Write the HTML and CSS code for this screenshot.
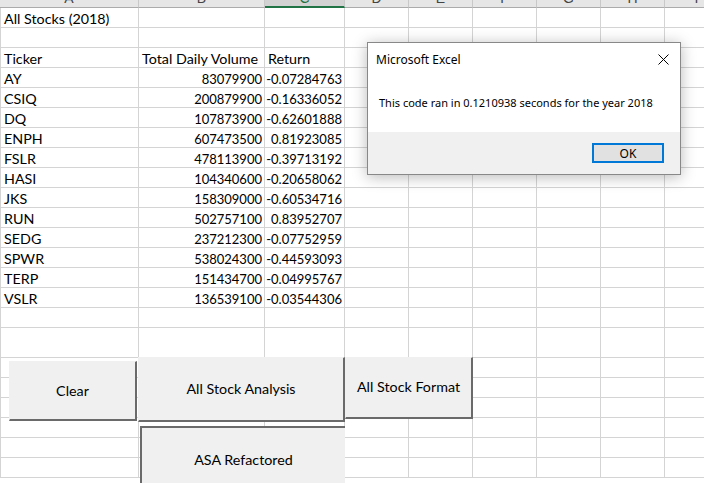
FILE: index.html
```html
<!DOCTYPE html>
<html>
<head>
<meta charset="utf-8">
<link rel="stylesheet" href="styles.css">
</head>
<body>
<div class="sheet">
  <div class="grid">
    <div class="hd"><span>A</span></div>
    <div class="hd"><span>B</span></div>
    <div class="hd hd-sel"><span>C</span></div>
    <div class="hd"><span>D</span></div>
    <div class="hd"><span>E</span></div>
    <div class="hd"><span>F</span></div>
    <div class="hd"><span>G</span></div>
    <div class="hd"><span>H</span></div>
    <div class="hd"><span>I</span></div>
  </div>
  <div class="grid body" id="body"></div>

  <button class="xbtn b-clear">Clear</button>
  <button class="xbtn b-asa">All Stock Analysis</button>
  <button class="xbtn b-fmt">All Stock Format</button>
  <button class="xbtn b-ref">ASA Refactored</button>

  <div class="dialog">
    <div class="dlg-title">
      <span>Microsoft Excel</span>
      <svg class="dlg-x" width="11" height="11" viewBox="0 0 11 11"><path d="M0.5 0.5 L10.5 10.5 M10.5 0.5 L0.5 10.5" stroke="#000" stroke-width="1" fill="none"/></svg>
    </div>
    <div class="dlg-msg">This code ran in 0.1210938 seconds for the year 2018</div>
    <div class="dlg-foot"><div class="ok">OK</div></div>
  </div>
</div>
<script src="script.js"></script>
</body>
</html>
```
FILE: script.js
```js
const rows = [
  ["All Stocks (2018)", "", ""],
  ["", "", ""],
  ["Ticker", "Total Daily Volume", "Return"],
  ["AY", "83079900", "-0.07284763"],
  ["CSIQ", "200879900", "-0.16336052"],
  ["DQ", "107873900", "-0.62601888"],
  ["ENPH", "607473500", "0.81923085"],
  ["FSLR", "478113900", "-0.39713192"],
  ["HASI", "104340600", "-0.20658062"],
  ["JKS", "158309000", "-0.60534716"],
  ["RUN", "502757100", "0.83952707"],
  ["SEDG", "237212300", "-0.07752959"],
  ["SPWR", "538024300", "-0.44593093"],
  ["TERP", "151434700", "-0.04995767"],
  ["VSLR", "136539100", "-0.03544306"],
  ["", "", ""],
  ["", "", "", "tall"],
  ["", "", ""], ["", "", ""], ["", "", ""], ["", "", ""], ["", "", ""], ["", "", ""]
];
const body = document.getElementById("body");
rows.forEach((r, i) => {
  for (let c = 0; c < 9; c++) {
    const d = document.createElement("div");
    d.className = "cell" + (r[3] === "tall" ? " tall" : "");
    const v = c < 3 ? r[c] : "";
    if (v) {
      d.textContent = v;
      if (i >= 3 && c > 0) d.classList.add("num");
    }
    body.appendChild(d);
  }
});
```
FILE: styles.css
```css
* { box-sizing: border-box; }
html, body { margin: 0; padding: 0; background: #fff; overflow: hidden; }
body { width: 704px; height: 483px; }
.sheet { position: relative; width: 704px; height: 483px; overflow: hidden; font-family: Lato, "Liberation Sans", sans-serif; font-size: 14.3px; color: #000; }
.grid { display: grid; grid-template-columns: 139px 126px 80px 64px 64px 64px 64px 64px 64px; width: 729px; }
.hd { height: 8px; background: #e6e6e6; border-right: 1px solid #c8c8c8; border-bottom: 1px solid #ababab; overflow: hidden; text-align: center; color: #444; font-family: "Liberation Sans", sans-serif; font-size: 14px; }
.hd span { display: block; line-height: 14px; margin-top: -9px; }
.hd-sel { background: #d2d2d2; border-bottom: 2px solid #217346; color: #217346; }
.cell { height: 20px; border-right: 1px solid #d4d4d4; border-bottom: 1px solid #d4d4d4; line-height: 22px; padding: 0 2px 0 3px; white-space: nowrap; overflow: visible; }
.body .cell:nth-child(9n+1) { border-left: 1px solid #d4d4d4; padding-left: 3px; }
.cell.tall { height: 30px; }
.cell.num { text-align: right; padding: 0 2px 0 0; font-size: 13px; }
.xbtn { position: absolute; margin: 0; padding: 0; background: #f0f0f0; font-family: Lato, "Liberation Sans", sans-serif; font-size: 14.3px; color: #000; border: 1px solid #f0f0f0; border-right: 2px solid #6a6a6a; border-bottom: 2px solid #6a6a6a; display: flex; align-items: center; justify-content: center; }
.b-clear { left: 9px; top: 361px; width: 128px; height: 60px; padding-bottom: 1px; }
.b-asa { left: 138px; top: 357px; width: 207px; height: 65px; padding-bottom: 2px; }
.b-fmt { left: 345px; top: 357px; width: 128px; height: 62px; padding-bottom: 2px; }
.b-ref { left: 140px; top: 426px; width: 205px; height: 70px; border: 0; border-left: 2px solid #6a6a6a; border-top: 2px solid #6a6a6a; padding-bottom: 36px; padding-top: 30px; }
.dialog { position: absolute; left: 367px; top: 42px; width: 314px; height: 133px; background: #fff; border: 1px solid #888; box-shadow: 0 2px 14px rgba(0,0,0,0.28); font-family: "Noto Sans", "Open Sans", sans-serif; display: flex; flex-direction: column; }
.dlg-title { height: 32px; display: flex; align-items: center; justify-content: space-between; padding: 0 11px 0 8px; font-size: 12px; color: #000; }
.dlg-msg { flex: 1; font-size: 11px; padding: 20px 0 0 11px; color: #000; }
.dlg-foot { height: 42px; background: #f0f0f0; display: flex; justify-content: flex-end; align-items: center; padding-right: 16px; }
.ok { width: 72px; height: 20px; border: 2px solid #0078d7; background: #e1e1e1; font-size: 12px; display: flex; align-items: center; justify-content: center; }
```
